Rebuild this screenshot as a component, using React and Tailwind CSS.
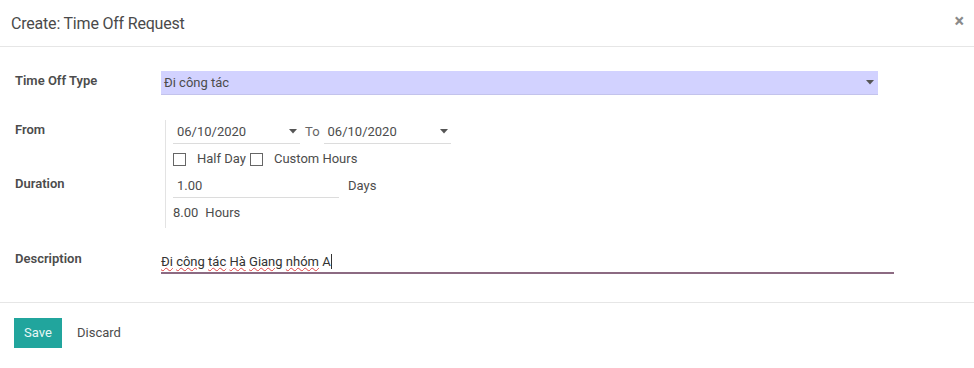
import React from "react";

function Caret() {
  return (
    <svg width="8" height="5" viewBox="0 0 8 5" className="shrink-0">
      <path d="M0 0 L8 0 L4 4.5 Z" fill="#555" />
    </svg>
  );
}

function Check() {
  return <span className="inline-block w-[13px] h-[13px] border border-[#666] bg-white shrink-0" />;
}

function Sq({ children }) {
  return (
    <span className="underline decoration-wavy decoration-[#e04040] decoration-1 underline-offset-[1px]">
      {children}
    </span>
  );
}

export default function App() {
  return (
    <div
      className="w-[974px] h-[368px] bg-white text-[13px] text-[#4c4c4c] overflow-hidden"
      style={{ fontFamily: "Roboto, 'Noto Sans', sans-serif" }}
    >
      {/* Header */}
      <div className="h-[47px] border-b border-[#e6e6e6] flex items-center justify-between pl-[11px] pr-[10px]">
        <div className="text-[16px] text-[#4a4a4a] pt-[1px] tracking-[-0.2px]">Create: Time Off Request</div>
        <div className="text-[18px] font-bold text-[#8a8a8a] leading-none pb-[4px]">×</div>
      </div>

      {/* Body */}
      <div className="pl-[15px] pt-[24px]">
        {/* Time off type */}
        <div className="flex items-center">
          <div className="w-[146px] font-semibold text-[#4c4c4c] pb-[4px]">Time Off Type</div>
          <div className="w-[717px] h-[24px] bg-[#d2d2ff] border-b border-[#c3c3ec] flex items-center justify-between pl-[3px] pr-[4px]">
            <span>Đi công tác</span>
            <Caret />
          </div>
        </div>

        {/* From / Duration group */}
        <div className="flex mt-[25px]">
          <div className="w-[146px] flex flex-col font-semibold">
            <div className="h-[20px] leading-[20px]">From</div>
            <div className="h-[20px] leading-[20px] mt-[34px]">Duration</div>
          </div>
          <div className="ml-[4px] border-l border-[#e3e3e3] pl-[7px] pb-[3px] flex flex-col">
            <div className="h-[24px] flex items-center">
              <div className="w-[127px] h-[24px] border-b border-[#dcdcdc] flex items-center justify-between pl-[4px] pr-[3px]">
                <span>06/10/2020</span>
                <Caret />
              </div>
              <span className="ml-[5px] mr-[4px] text-[#666]">To</span>
              <div className="w-[127px] h-[24px] border-b border-[#dcdcdc] flex items-center justify-between pl-[4px] pr-[3px]">
                <span>06/10/2020</span>
                <Caret />
              </div>
            </div>
            <div className="h-[24px] mt-[3px] flex items-center">
              <Check />
              <span className="ml-[11px] mr-[4px]">Half Day</span>
              <Check />
              <span className="ml-[11px]">Custom Hours</span>
            </div>
            <div className="h-[24px] mt-[3px] flex items-center">
              <div className="w-[166px] h-[24px] border-b border-[#dcdcdc] flex items-center pl-[4px]">1.00</div>
              <span className="ml-[9px]">Days</span>
            </div>
            <div className="h-[24px] mt-[3px] flex items-center">
              <span>8.00</span>
              <span className="ml-[7px]">Hours</span>
            </div>
          </div>
        </div>

        {/* Description */}
        <div className="flex items-center mt-[21px]">
          <div className="w-[146px] font-semibold pb-[7px]">Description</div>
          <div className="w-[733px] h-[24px] border-b-2 border-[#8c6a82] flex items-center text-[#333]">
            <Sq>Đi</Sq>&nbsp;<Sq>công</Sq>&nbsp;<Sq>tác</Sq>&nbsp;<Sq>Hà</Sq>&nbsp;<Sq>Giang</Sq>&nbsp;<Sq>nhóm</Sq>&nbsp;A
            <span className="inline-block w-[1px] h-[15px] bg-[#333]" />
          </div>
        </div>
      </div>

      {/* Footer */}
      <div className="mt-[26px] border-t border-[#e6e6e6] pt-[15px] pl-[14px] flex items-center">
        <button className="w-[48px] h-[30px] bg-[#21a59d] text-[#e8f7f6] text-[13px]">Save</button>
        <span className="ml-[15px] text-[#4c4c4c]">Discard</span>
      </div>
    </div>
  );
}
